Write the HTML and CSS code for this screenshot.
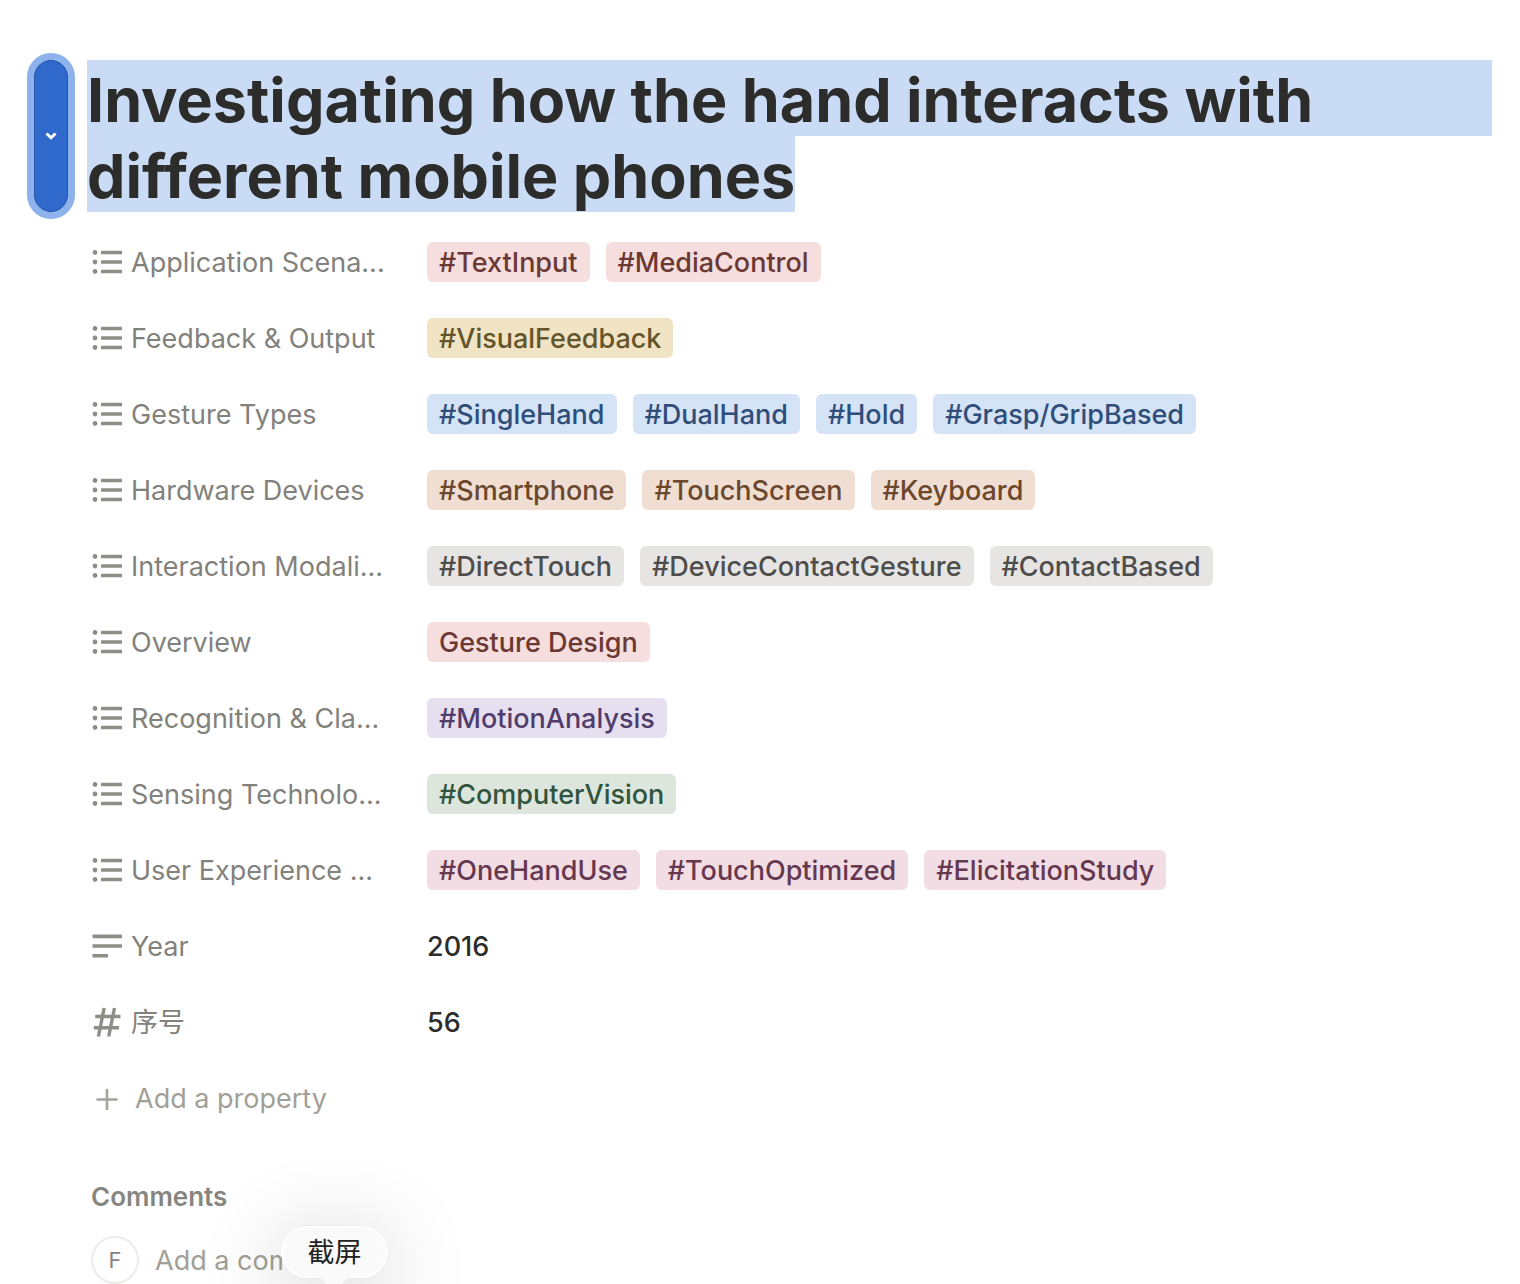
FILE: index.html
```html
<!DOCTYPE html>
<html lang="en">
<head>
<meta charset="utf-8">
<meta name="viewport" content="width=device-width, initial-scale=1">
<title>Investigating how the hand interacts with different mobile phones</title>
<link rel="stylesheet" href="styles.css">
</head>
<body>
<svg class="sprite" aria-hidden="true">
  <symbol id="list" viewBox="0 0 32 32"><g fill="currentColor"><circle cx="4" cy="6.500" r="2.400"/><circle cx="4" cy="16" r="2.400"/><circle cx="4" cy="25.500" r="2.400"/><rect x="10" y="4.800" width="21" height="3.500" rx=".6"/><rect x="10" y="14.300" width="21" height="3.500" rx=".6"/><rect x="10" y="23.800" width="21" height="3.500" rx=".6"/></g></symbol>
  <symbol id="text" viewBox="0 0 32 32"><g fill="currentColor"><rect x="1.500" y="4.600" width="29.500" height="3.600" rx=".6"/><rect x="1.500" y="14.200" width="29.500" height="3.600" rx=".6"/><rect x="1.500" y="23.900" width="15.500" height="3.600" rx=".6"/></g></symbol>
  <symbol id="number" viewBox="0 0 32 32"><path d="M13.200 2 7.400 30.500M23.500 2 17.700 30.500M4.200 10.500H29.500M2.800 21.700H28" fill="none" stroke="currentColor" stroke-width="3.400"/></symbol>
</svg>
<main class="page">
  <header class="heading">
    <button class="handle" type="button" aria-label="Title options">
      <svg class="chevron" viewBox="0 0 12 8" aria-hidden="true"><path d="M1.500 1.500 6 5.800 10.500 1.500"/></svg>
    </button>
    <h1 class="title"><mark class="line full">Investigating how the hand interacts with</mark> <mark class="line">different mobile phones</mark></h1>
  </header>
  <div class="content">
    <dl class="properties">
      <div class="row"><dt><svg class="icon"><use href="#list"/></svg><span class="label">Application Scena...</span></dt><dd><span class="tag red">#TextInput</span><span class="tag red">#MediaControl</span></dd></div>
      <div class="row"><dt><svg class="icon"><use href="#list"/></svg><span class="label">Feedback &amp; Output</span></dt><dd><span class="tag yellow">#VisualFeedback</span></dd></div>
      <div class="row"><dt><svg class="icon"><use href="#list"/></svg><span class="label">Gesture Types</span></dt><dd><span class="tag blue">#SingleHand</span><span class="tag blue">#DualHand</span><span class="tag blue">#Hold</span><span class="tag blue">#Grasp/GripBased</span></dd></div>
      <div class="row"><dt><svg class="icon"><use href="#list"/></svg><span class="label">Hardware Devices</span></dt><dd><span class="tag brown">#Smartphone</span><span class="tag brown">#TouchScreen</span><span class="tag brown">#Keyboard</span></dd></div>
      <div class="row"><dt><svg class="icon"><use href="#list"/></svg><span class="label">Interaction Modali...</span></dt><dd><span class="tag gray">#DirectTouch</span><span class="tag gray">#DeviceContactGesture</span><span class="tag gray">#ContactBased</span></dd></div>
      <div class="row"><dt><svg class="icon"><use href="#list"/></svg><span class="label">Overview</span></dt><dd><span class="tag red">Gesture Design</span></dd></div>
      <div class="row"><dt><svg class="icon"><use href="#list"/></svg><span class="label">Recognition &amp; Cla...</span></dt><dd><span class="tag purple">#MotionAnalysis</span></dd></div>
      <div class="row"><dt><svg class="icon"><use href="#list"/></svg><span class="label">Sensing Technolo...</span></dt><dd><span class="tag green">#ComputerVision</span></dd></div>
      <div class="row"><dt><svg class="icon"><use href="#list"/></svg><span class="label">User Experience ...</span></dt><dd><span class="tag pink">#OneHandUse</span><span class="tag pink">#TouchOptimized</span><span class="tag pink">#ElicitationStudy</span></dd></div>
      <div class="row"><dt><svg class="icon"><use href="#text"/></svg><span class="label">Year</span></dt><dd><span class="label value">2016</span></dd></div>
      <div class="row"><dt><svg class="icon"><use href="#number"/></svg><span class="label">序号</span></dt><dd><span class="label value">56</span></dd></div>
    </dl>
    <button class="add" type="button"><svg class="plus" viewBox="0 0 24 24" aria-hidden="true"><path d="M12 4v19M2.500 13.500h19"/></svg><span class="label">Add a property</span></button>
    <section class="comments">
      <h2 class="subtitle">Comments</h2>
      <form class="comment">
        <span class="avatar">F</span>
        <input class="field" type="text" placeholder="Add a comment..." aria-label="Add a comment">
        <div class="tooltip" role="tooltip">截屏</div>
      </form>
    </section>
  </div>
</main>
</body>
</html>
```
FILE: styles.css
```css
* { box-sizing: border-box; }

body {
  margin: 0;
  background: #fff;
  color: #2c2c2b;
  font: 400 27px/38px Inter, "Noto Sans CJK SC", sans-serif;
}

button, input { font: inherit; }
.sprite { display: none; }

.page {
  padding: 60px 28px 0 34px;
  overflow: hidden;
}

.heading { display: flex; gap: 19px; }

.handle {
  display: flex;
  flex: none;
  align-items: center;
  justify-content: center;
  width: 34px;
  padding: 0;
  border: 1px solid #2556ac;
  border-radius: 17px;
  background: #3069cc;
  box-shadow: 0 0 0 7px #8eb2eb;
}

.chevron {
  width: 12px;
  height: 8px;
  fill: none;
  stroke: #fff;
  stroke-width: 3;
}

.title {
  flex: 1;
  margin: 0;
  font-size: 61px;
  font-weight: 700;
  line-height: 72px;
}

.line {
  display: inline-block;
  padding-top: 4px;
  background: #cadbf5;
  color: inherit;
  vertical-align: top;
}

.full { display: block; }

.content { padding: 16px 0 0 57px; }

.properties {
  display: grid;
  gap: 8px;
  margin: 0;
}

.row {
  display: grid;
  grid-template-columns: 336px 1fr;
  align-items: center;
  min-height: 68px;
}

dt {
  display: flex;
  align-items: center;
  gap: 8px;
  color: #82817c;
  white-space: nowrap;
}

.icon {
  flex: none;
  width: 32px;
  height: 32px;
  color: #8e8d86;
}

dd {
  display: flex;
  flex-wrap: wrap;
  gap: 16px;
  margin: 0;
}

.label { padding-top: 2px; }
.value { font-weight: 500; }

.tag {
  padding: 2px 12px 0;
  border-radius: 6px;
  font-weight: 500;
}

.red { background: #f5dedd; color: #6b3833; }
.yellow { background: #f0e4c4; color: #64552a; }
.blue { background: #d5e3f6; color: #2f4e7a; }
.brown { background: #f0ded3; color: #6b482d; }
.gray { background: #e6e5e3; color: #4e4d4b; }
.purple { background: #e6dff0; color: #513d6b; }
.green { background: #dce6dd; color: #32543f; }
.pink { background: #f2dde4; color: #663850; }

.add {
  display: flex;
  align-items: center;
  gap: 16px;
  height: 68px;
  margin-top: 8px;
  padding: 0 4px;
  border: 0;
  background: none;
  color: #a19f97;
}

.plus {
  width: 24px;
  height: 24px;
  fill: none;
  stroke: #a5a39b;
  stroke-width: 2.600;
  stroke-linecap: round;
}

.comments { padding-top: 45px; }

.subtitle {
  margin: 0;
  color: #868580;
  font-size: 26px;
  font-weight: 600;
  line-height: 40px;
}

.comment {
  position: relative;
  display: flex;
  gap: 16px;
  margin-top: 19px;
}

.avatar {
  flex: none;
  width: 48px;
  height: 48px;
  border: 2px solid #ebebea;
  border-radius: 50%;
  color: #868580;
  font-size: 22px;
  line-height: 44px;
  text-align: center;
}

.field {
  flex: 1;
  min-width: 0;
  height: 48px;
  padding: 0;
  border: 0;
  outline: 0;
  background: none;
}

.field::placeholder { color: #a19f97; opacity: 1; }

.tooltip {
  position: absolute;
  top: -10px;
  left: 190px;
  width: 107px;
  padding-top: 2px;
  border: 2px solid #fff;
  border-radius: 26px;
  background: #fafafa;
  box-shadow: 0 16px 90px rgba(0, 0, 0, 0.24), 0 0 2px rgba(0, 0, 0, 0.06);
  color: #222;
  line-height: 46px;
  text-align: center;
}

.tooltip::after {
  content: "";
  position: absolute;
  top: 48px;
  left: 33px;
  width: 36px;
  height: 16px;
  background: #fafafa;
  clip-path: polygon(0 0, 100% 0, 84% 18%, 60% 80%, 50% 90%, 40% 80%, 16% 18%);
}
```
